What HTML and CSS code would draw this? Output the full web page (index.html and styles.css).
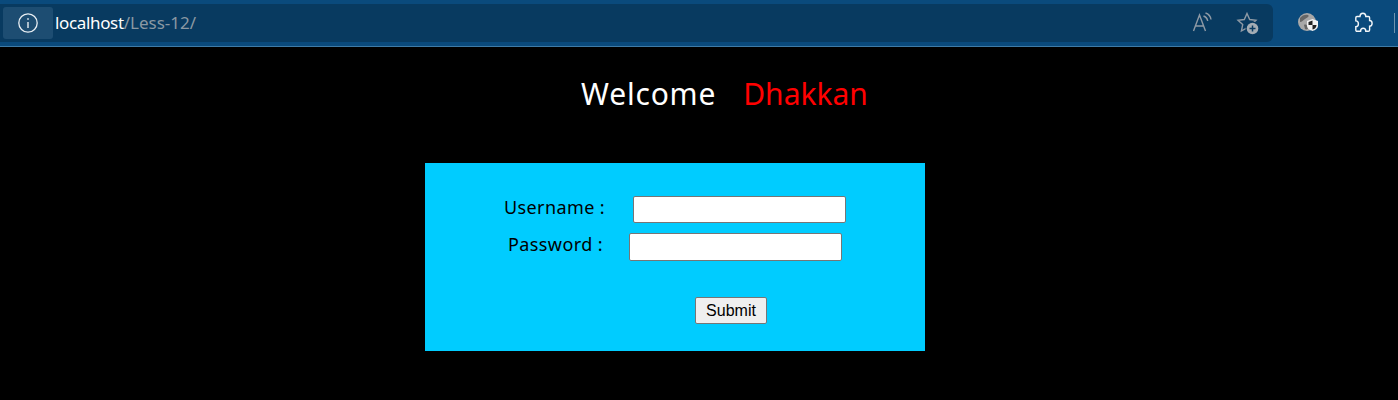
FILE: index.html
```html
<!DOCTYPE html>
<html lang="en">
<head>
  <meta charset="UTF-8" />
  <title>Less-12</title>
  <link rel="stylesheet" href="styles.css">
</head>
<body>

  <!-- Browser toolbar -->
  <div class="toolbar">
    <div class="address-bar">
      <div class="site-info">
        <svg width="22" height="22" viewBox="0 0 22 22" fill="none" stroke="#e8eef3" stroke-width="1.3">
          <circle cx="11" cy="11" r="9.2"/>
          <path d="M11 10v6" stroke-width="1.4"/>
          <path d="M11 6.2v1.6" stroke-width="1.6"/>
        </svg>
      </div>
      <div class="url"><span class="host">localhost</span><span class="path">/Less-12/</span></div>
      <div class="bar-icons">
        <svg width="22" height="24" viewBox="0 0 22 24" fill="none" stroke="#8f9aa5" stroke-width="1.4">
          <path d="M1.5 20L7.500 4L13.500 20M3.500 15h8"/>
          <path d="M11.500 5c2.400.8 3.800 2.600 4.200 5M13.500 2c3.200 1 5 3.400 5.500 6.500"/>
        </svg>
        <svg width="24" height="24" viewBox="0 0 24 24" fill="none" stroke="#8f9aa5" stroke-width="1.4">
          <path d="M11 2.500l2.700 6 6.300.7-4.700 4.400 1.300 6.400-5.600-3.200-5.600 3.200 1.300-6.400L2 9.200l6.300-.7z"/>
          <circle cx="16.500" cy="17.500" r="7" fill="#083a60" stroke="none"/>
          <circle cx="16.500" cy="17.500" r="5.800" fill="#a3acb4" stroke="none"/>
          <path d="M16.500 14.500v6M13.500 17.500h6" stroke="#083a60" stroke-width="1.500"/>
        </svg>
      </div>
    </div>
    <div class="ext-icons">
      <svg width="22" height="22" viewBox="0 0 22 22">
        <circle cx="10" cy="10" r="9" fill="#a8a8a8"/>
        <path d="M3 6c2-3 6-4 8-3s-1 3-3 4-3 3-5 3zM7 13c2-1 3 0 4 2s-2 3-3 2z" fill="#666"/>
        <path d="M10 9l5.500-2 5.500 2v4.500c0 3-2.400 4.500-5.500 5.500-3.100-1-5.500-2.500-5.500-5.500z" fill="#f2f2f2"/>
        <path d="M15.500 8.500v4.500h-4v-3zM15.500 13h4c0 2.400-1.500 3.800-4 4.600z" fill="#222"/>
      </svg>
      <svg width="24" height="24" viewBox="0 0 24 24" fill="none" stroke="#f2f6f9" stroke-width="1.4">
        <path d="M8 5.500c0-2 1.200-3.300 2.900-3.300s2.900 1.300 2.900 3.300h2.600c.8 0 1.200.4 1.200 1.200v2.800c1.600 0 2.500 1.200 2.500 2.800s-.9 2.900-2.500 2.900v3.800c0 .8-.4 1.200-1.200 1.200h-2.600c0-2-1.200-2.900-2.600-2.900s-2.600 1-2.600 2.900H5c-.8 0-1.200-.4-1.200-1.200v-3.400c1.600 0 2.600-1.200 2.600-2.700S5.400 9.900 3.800 9.900V6.700c0-.8.400-1.200 1.200-1.200z"/>
      </svg>
      <span class="divider"></span>
    </div>
  </div>

  <h1 class="welcome"><span class="hello">Welcome</span><span class="name">Dhakkan</span></h1>

  <form class="login-box">
    <div class="row">
      <label>Username :</label>
      <input type="text" name="uname">
    </div>
    <div class="row row-tall">
      <label>Password :</label>
      <input type="password" name="passwd">
    </div>
    <div class="submit-row">
      <input type="submit" value="Submit">
    </div>
  </form>

</body>
</html>
```
FILE: styles.css
```css
body {
  margin: 0;
  background-color: #000;
  font-family: "Noto Sans", "Open Sans", sans-serif;
  height: 400px;
  overflow: hidden;
}

/* Toolbar */
.toolbar {
  display: flex;
  align-items: center;
  height: 47px;
  box-sizing: border-box;
  background-color: #0a4a7c;
  border-bottom: 1px solid #3f7ba6;
  padding-bottom: 1px;
}

.address-bar {
  display: flex;
  align-items: center;
  width: 1273px;
  height: 38px;
  box-sizing: border-box;
  padding-left: 3px;
  background-color: #083a60;
  border-radius: 0 6px 6px 0;
}

.site-info {
  display: flex;
  justify-content: center;
  align-items: center;
  width: 50px;
  height: 32px;
  background-color: #1d4d72;
  border-radius: 3px;
}

.url {
  margin-left: 2px;
  font-size: 17px;
}

.host {
  color: #fff;
  letter-spacing: -0.35px;
}

.path {
  color: #8b98a3;
}

.bar-icons {
  display: flex;
  align-items: center;
  gap: 22px;
  margin-left: auto;
  margin-right: 13px;
}

.ext-icons {
  display: flex;
  align-items: center;
  flex: 1;
  padding-left: 24px;
}

.ext-icons svg + svg {
  margin-left: 33px;
}

.divider {
  width: 1px;
  height: 20px;
  margin-left: 18px;
  background-color: #6f93ae;
}

/* Heading */
.welcome {
  display: flex;
  justify-content: center;
  gap: 27px;
  margin: 26px 0 0;
  padding-left: 51px;
  height: 90px;
  font-size: 30px;
  font-weight: 400;
  line-height: 42px;
  color: #fff;
}

.hello {
  letter-spacing: 0.8px;
}

.name {
  color: #f00;
}

/* Form */
.login-box {
  width: 500px;
  height: 188px;
  box-sizing: border-box;
  margin-left: 425px;
  padding-top: 33px;
  background-color: #00ccff;
  color: #000;
}

.row {
  display: flex;
  justify-content: center;
  align-items: center;
  gap: 28px;
  height: 27px;
  margin-bottom: 10px;
  font-size: 18px;
  letter-spacing: 0.4px;
}

.row label {
  margin-bottom: 6px;
}

.row input {
  width: 213px;
  height: 27px;
  box-sizing: border-box;
  border: 1px solid #767676;
  border-radius: 2px;
  background: #fff;
  padding: 1px 2px;
}

.row-tall {
  height: 28px;
  gap: 26px;
}

.row-tall input {
  height: 28px;
}

.submit-row {
  display: flex;
  justify-content: center;
  margin-top: 36px;
  padding-left: 112px;
}

.submit-row input {
  width: 72px;
  height: 27px;
  box-sizing: border-box;
  border: 1px solid #767676;
  border-radius: 2px;
  background-color: #efefef;
  font-family: "Liberation Sans", Arial, sans-serif;
  font-size: 16px;
  color: #000;
  padding: 0;
}
```
